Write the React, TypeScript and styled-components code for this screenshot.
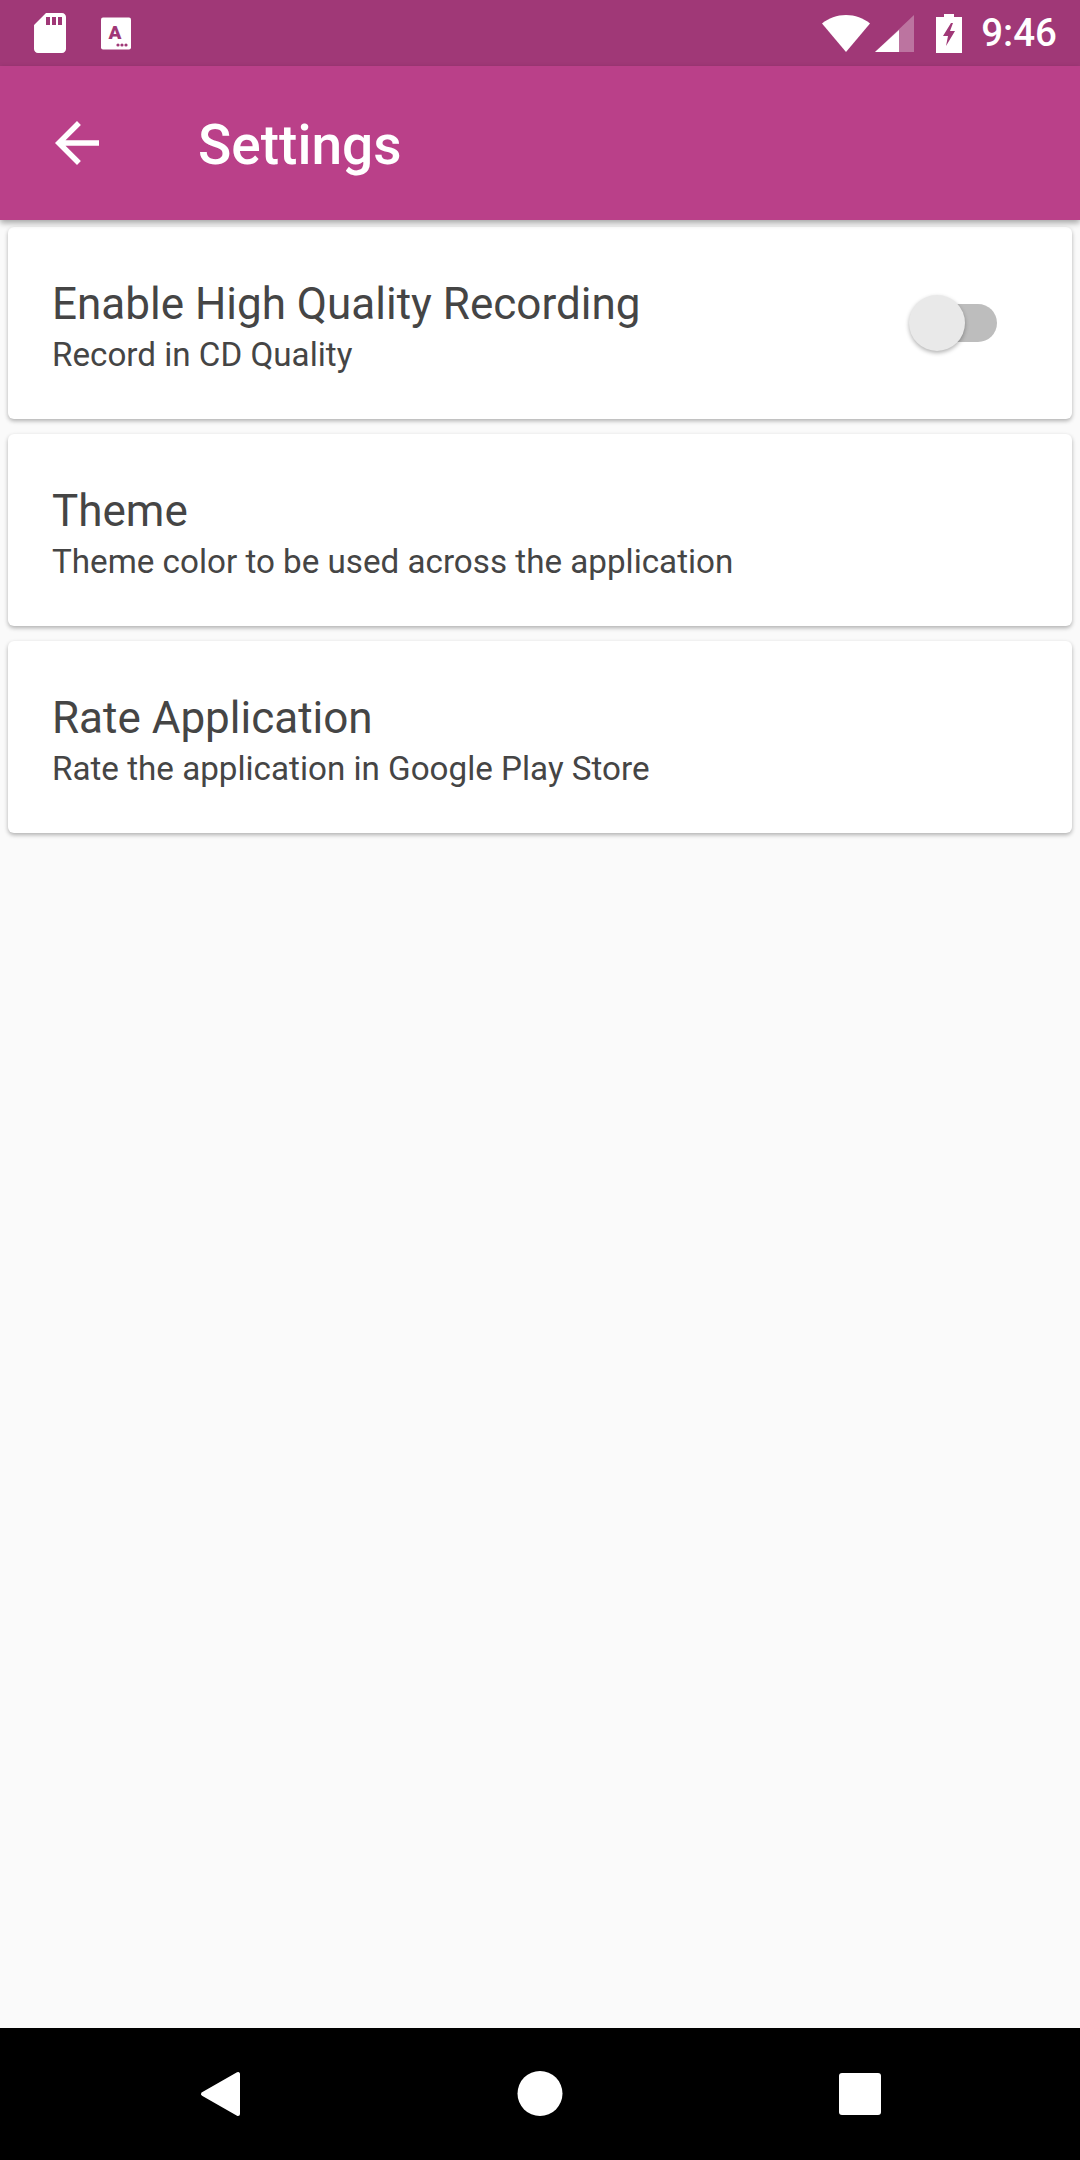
import React from "react";
import styled, { createGlobalStyle } from "styled-components";

const GlobalStyle = createGlobalStyle`
	html, body {
		margin: 0;
		padding: 0;
		background: #fafafa;
		font-family: Roboto, "Noto Sans", sans-serif;
	}
`;

const Screen = styled.div`
	display: flex;
	flex-direction: column;
	width: 1080px;
	height: 2160px;
	overflow: hidden;
	background: #fafafa;
`;

const StatusBar = styled.div`
	display: flex;
	align-items: center;
	justify-content: space-between;
	height: 66px;
	padding: 0 23px 0 26px;
	box-sizing: border-box;
	background: #a03877;
	color: #fff;
`;

const IconGroup = styled.div<{ $gap: number; $inset?: number }>`
	display: flex;
	align-items: center;
	gap: ${(p) => p.$gap}px;
	margin-left: ${(p) => p.$inset || 0}px;
`;

const Clock = styled.span`
	font-size: 38.5px;
	font-weight: 500;
	line-height: 66px;
	margin-left: 19px;
`;

const Toolbar = styled.header`
	position: relative;
	z-index: 1;
	display: flex;
	align-items: center;
	height: 154px;
	padding-left: 44px;
	box-sizing: border-box;
	background: #ba4089;
	box-shadow: 0 3px 6px rgba(0, 0, 0, 0.34);
`;

const ToolbarTitle = styled.h1`
	margin: 4px 0 0 88px;
	color: #fff;
	font-size: 55px;
	font-weight: 500;
`;

const List = styled.main`
	flex: 1;
	display: flex;
	flex-direction: column;
	gap: 15px;
	padding: 7px 8px 0;
`;

const Card = styled.section`
	display: flex;
	align-items: center;
	justify-content: space-between;
	height: 192px;
	padding: 0 75px 0 44px;
	box-sizing: border-box;
	border-radius: 6px;
	background: #fff;
	box-shadow: 0 2px 4px rgba(0, 0, 0, 0.3);
`;

const CardText = styled.div`
	display: flex;
	flex-direction: column;
	padding-top: 7px;
	color: #454545;
`;

const CardTitle = styled.div`
	font-size: 44px;
	line-height: 56px;
`;

const CardSubtitle = styled.div`
	font-size: 33.2px;
	line-height: 46px;
`;

const SwitchTrack = styled.div`
	position: relative;
	width: 84px;
	height: 38px;
	border-radius: 19px;
	background: #bdbdbd;
`;

const SwitchThumb = styled.div`
	position: absolute;
	top: -9px;
	left: -4px;
	width: 56px;
	height: 56px;
	border-radius: 50%;
	background: #e9e9e9;
	box-shadow: 0 2px 4px rgba(0, 0, 0, 0.3);
`;

const NavBar = styled.nav`
	display: flex;
	align-items: center;
	justify-content: space-between;
	height: 132px;
	padding: 0 187px;
	box-sizing: border-box;
	background: #000;
`;

const settings = [
	{ title: "Enable High Quality Recording", subtitle: "Record in CD Quality", toggle: true },
	{ title: "Theme", subtitle: "Theme color to be used across the application" },
	{ title: "Rate Application", subtitle: "Rate the application in Google Play Store" },
];

const SdCardIcon = () => (
	<svg width="48" height="48" viewBox="0 0 24 24" fill="#fff">
		<path d="M18 2h-8L4.020 8 4 20c0 1.100.9 2 2 2h12c1.100 0 2-.9 2-2V4c0-1.100-.9-2-2-2zm-6 6h-2V4h2v4zm3 0h-2V4h2v4zm3 0h-2V4h2v4z" />
	</svg>
);

const StoreIcon = () => (
	<svg width="30" height="33" viewBox="0 0 30 33">
		<rect x="0" y="0.5" width="30" height="32" rx="2" fill="#fff" />
		<text x="14" y="22" textAnchor="middle" fontFamily="Roboto" fontWeight="900" fontSize="19" fill="#a03877">
			A
		</text>
		<circle cx="17" cy="28" r="1.6" fill="#a03877" />
		<circle cx="21" cy="28" r="1.6" fill="#a03877" />
		<circle cx="25" cy="28" r="1.6" fill="#a03877" />
	</svg>
);

const WifiIcon = () => (
	<svg width="48" height="37" viewBox="0 0 48 37" fill="#fff">
		<path d="M24 37 0 8.500C6.500 3.200 15 0 24 0s17.500 3.200 24 8.500z" />
	</svg>
);

const SignalIcon = () => (
	<svg width="39" height="37" viewBox="0 0 39 37" fill="#fff">
		<path d="M39 0v37H0z" opacity="0.3" />
		<path d="M24 15v22H0z" />
	</svg>
);

const BatteryIcon = () => (
	<svg width="26" height="39" viewBox="0 0 26 39">
		<path d="M8 0h10v3h8v36H0V3h8z" fill="#fff" />
		<path d="M15 9 7 22h5l-2 10 9-15h-5l3-8z" fill="#a03877" />
	</svg>
);

const BackArrow = () => (
	<svg width="66" height="66" viewBox="0 0 24 24" fill="#fff">
		<path d="M20 11H7.830l5.590-5.590L12 4l-8 8 8 8 1.410-1.410L7.830 13H20v-2z" />
	</svg>
);

const NavBack = () => (
	<svg width="66" height="66" viewBox="0 0 66 66" fill="#fff" stroke="#fff" strokeWidth="4" strokeLinejoin="round">
		<path d="M16 33 51 13v40z" />
	</svg>
);

const NavHome = () => (
	<svg width="66" height="66" viewBox="0 0 66 66" fill="#fff">
		<circle cx="33" cy="32.500" r="22.500" />
	</svg>
);

const NavRecents = () => (
	<svg width="66" height="66" viewBox="0 0 66 66" fill="#fff">
		<rect x="12" y="12" width="42" height="42" rx="3" />
	</svg>
);

const App = () => (
	<Screen>
		<GlobalStyle />
		<StatusBar>
			<IconGroup $gap={27}>
				<SdCardIcon />
				<StoreIcon />
			</IconGroup>
			<IconGroup $gap={5}>
				<WifiIcon />
				<SignalIcon />
				<IconGroup $gap={0} $inset={17}>
					<BatteryIcon />
					<Clock>9:46</Clock>
				</IconGroup>
			</IconGroup>
		</StatusBar>
		<Toolbar>
			<BackArrow />
			<ToolbarTitle>Settings</ToolbarTitle>
		</Toolbar>
		<List>
			{settings.map((item) => (
				<Card key={item.title}>
					<CardText>
						<CardTitle>{item.title}</CardTitle>
						<CardSubtitle>{item.subtitle}</CardSubtitle>
					</CardText>
					{item.toggle && (
						<SwitchTrack>
							<SwitchThumb />
						</SwitchTrack>
					)}
				</Card>
			))}
		</List>
		<NavBar>
			<NavBack />
			<NavHome />
			<NavRecents />
		</NavBar>
	</Screen>
);

export default App;
